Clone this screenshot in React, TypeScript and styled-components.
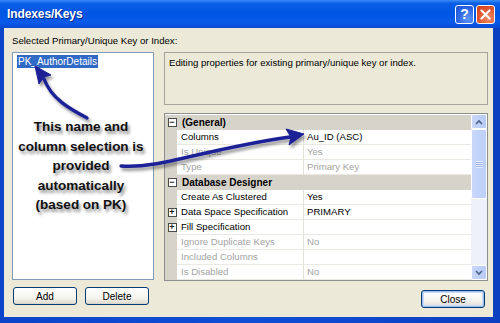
import React from 'react';
import styled, { createGlobalStyle } from 'styled-components';

const GlobalStyle = createGlobalStyle`
  html, body {
    margin: 0;
    padding: 0;
    background: #ffffff;
  }
  body {
    font-family: 'Liberation Sans', Arial, sans-serif;
  }
`;

type PropRow = {
  name: string;
  value?: string;
  category?: boolean;
  expander?: 'minus' | 'plus';
  disabled?: boolean;
};

const rows: PropRow[] = [
  { name: '(General)', category: true, expander: 'minus' },
  { name: 'Columns', value: 'Au_ID (ASC)' },
  { name: 'Is Unique', value: 'Yes', disabled: true },
  { name: 'Type', value: 'Primary Key', disabled: true },
  { name: 'Database Designer', category: true, expander: 'minus' },
  { name: 'Create As Clustered', value: 'Yes' },
  { name: 'Data Space Specification', value: 'PRIMARY', expander: 'plus' },
  { name: 'Fill Specification', value: '', expander: 'plus' },
  { name: 'Ignore Duplicate Keys', value: 'No', disabled: true },
  { name: 'Included Columns', value: '', disabled: true },
  { name: 'Is Disabled', value: 'No', disabled: true },
];

const App = () => {
  return (
    <>
      <GlobalStyle />
      <Window>
        <TitleBar>
          <Title>Indexes/Keys</Title>
          <CaptionButtons>
            <CaptionButton $kind='help'>?</CaptionButton>
            <CaptionButton $kind='close'>
              <svg width='11' height='11' viewBox='0 0 11 11'>
                <path d='M1.5 1.5 L9.5 9.5 M9.5 1.5 L1.5 9.5' stroke='#fff' strokeWidth='2.2' strokeLinecap='round' />
              </svg>
            </CaptionButton>
          </CaptionButtons>
        </TitleBar>
        <Body>
          <Label>Selected Primary/Unique Key or Index:</Label>
          <Columns>
            <LeftCol>
              <ListBox>
                <ListItem>PK_AuthorDetails</ListItem>
                <Callout>
                  This name and
                  <br />
                  column selection is
                  <br />
                  provided
                  <br />
                  automatically
                  <br />
                  (based on PK)
                </Callout>
              </ListBox>
              <ButtonRow>
                <Button>Add</Button>
                <Button>Delete</Button>
              </ButtonRow>
            </LeftCol>
            <RightCol>
              <Description>Editing properties for existing primary/unique key or index.</Description>
              <Grid>
                <Rows>
                  {rows.map((r) => (
                    <Row key={r.name} $category={r.category}>
                      <Gutter>
                        {r.expander && <Expander>{r.expander === 'minus' ? '−' : '+'}</Expander>}
                      </Gutter>
                      {r.category ? (
                        <CategoryName>{r.name}</CategoryName>
                      ) : (
                        <>
                          <Cell $disabled={r.disabled}>{r.name}</Cell>
                          <Cell $disabled={r.disabled} $value>
                            {r.value}
                          </Cell>
                        </>
                      )}
                    </Row>
                  ))}
                </Rows>
                <ScrollBar>
                  <ScrollButton>
                    <svg width='8' height='6' viewBox='0 0 8 6'>
                      <path d='M1 5 L4 2 L7 5' stroke='#4d6185' strokeWidth='1.6' fill='none' />
                    </svg>
                  </ScrollButton>
                  <Thumb>
                    <Grip />
                  </Thumb>
                  <Track />
                  <ScrollButton>
                    <svg width='8' height='6' viewBox='0 0 8 6'>
                      <path d='M1 1 L4 4 L7 1' stroke='#4d6185' strokeWidth='1.6' fill='none' />
                    </svg>
                  </ScrollButton>
                </ScrollBar>
              </Grid>
              <CloseRow>
                <Button $default>Close</Button>
              </CloseRow>
            </RightCol>
          </Columns>
        </Body>
        <Arrows width='500' height='323' viewBox='0 0 500 323'>
          <defs>
            <filter id='shadow' x='-20%' y='-20%' width='140%' height='140%'>
              <feDropShadow dx='2' dy='3' stdDeviation='1.6' floodColor='#000' floodOpacity='0.4' />
            </filter>
          </defs>
          <g filter='url(#shadow)' fill='#1b2096' stroke='#1b2096'>
            <path d='M87 118 C 72 110, 52 100, 44 79' fill='none' strokeWidth='3.4' strokeLinecap='round' />
            <polygon points='35,66 51,75 44,77 39,84' strokeWidth='1' strokeLinejoin='round' />
            <path d='M121 166 C 160 169, 200 150, 290 137' fill='none' strokeWidth='3.4' strokeLinecap='round' />
            <polygon points='304,134 289,145 291,137 286,129' strokeWidth='1' strokeLinejoin='round' />
          </g>
        </Arrows>
      </Window>
    </>
  );
};

export default App;

const Window = styled.div`
  position: relative;
  width: 500px;
  height: 323px;
  box-sizing: border-box;
  display: flex;
  flex-direction: column;
  padding: 0 7px 6px 4px;
  background: linear-gradient(to right, #0a44c8, #0f4fd6 50%, #0a3fc0);
  overflow: hidden;
`;

const TitleBar = styled.div`
  height: 28px;
  margin: 0 -7px 0 -4px;
  padding: 0 5px 0 7px;
  display: flex;
  align-items: center;
  justify-content: space-between;
  background: linear-gradient(to bottom, #3d8cf5 0%, #0a5fe6 12%, #0055e5 45%, #0a5ae8 80%, #0648d0 100%);
`;

const Title = styled.div`
  color: #ffffff;
  font-weight: 700;
  font-size: 12px;
  text-shadow: 1px 1px 0 #0a2a8a;
  letter-spacing: -0.1px;
`;

const CaptionButtons = styled.div`
  display: flex;
  gap: 2px;
`;

const CaptionButton = styled.div<{ $kind: 'help' | 'close' }>`
  width: 19px;
  height: 19px;
  box-sizing: border-box;
  border: 1px solid #ffffff;
  border-radius: 3px;
  display: flex;
  align-items: center;
  justify-content: center;
  color: #ffffff;
  font-weight: 700;
  font-size: 14px;
  background: ${({ $kind }) =>
    $kind === 'help'
      ? 'radial-gradient(circle at 70% 75%, #5e96f7, #2a63e4 60%, #1e50d3)'
      : 'radial-gradient(circle at 70% 75%, #f08a68, #e0532e 60%, #c83d1a)'};
`;

const Body = styled.div`
  flex: 1;
  background: #ece9d8;
  padding: 7px 0 0 8px;
  display: flex;
  flex-direction: column;
  font-size: 9.6px;
  color: #000000;
`;

const Label = styled.div`
  height: 12px;
  line-height: 12px;
  margin-bottom: 5px;
`;

const Columns = styled.div`
  display: flex;
  gap: 10px;
`;

const LeftCol = styled.div`
  width: 142px;
  display: flex;
  flex-direction: column;
`;

const ListBox = styled.div`
  position: relative;
  height: 228px;
  box-sizing: border-box;
  border: 1px solid #7f9db9;
  background: #ffffff;
  padding: 2px 4px;
`;

const ListItem = styled.div`
  display: inline-block;
  background: #316ac5;
  color: #ffffff;
  padding: 1px 1px;
  line-height: 11px;
  font-size: 10px;
`;

const Callout = styled.div`
  position: absolute;
  left: -10px;
  right: -6px;
  top: 64px;
  text-align: center;
  font-weight: 700;
  font-size: 13.5px;
  line-height: 19.5px;
  color: #111111;
  text-shadow: 2px 3px 3px rgba(0, 0, 0, 0.45);
`;

const ButtonRow = styled.div`
  display: flex;
  gap: 8px;
  margin-top: 7px;
  padding-left: 1px;
`;

const Button = styled.div<{ $default?: boolean }>`
  width: 64px;
  height: 18px;
  box-sizing: border-box;
  border: 1px solid #003c74;
  border-radius: 3px;
  display: flex;
  align-items: center;
  justify-content: center;
  font-size: 10px;
  background: linear-gradient(to bottom, #ffffff 0%, #f5f4ee 60%, #e4e1d6 90%, #d6d0c5 100%);
  box-shadow: ${({ $default }) => ($default ? 'inset 0 0 0 1px #9dbdf2, inset 0 0 0 2px #c9dbf9' : 'none')};
`;

const RightCol = styled.div`
  width: 324px;
  display: flex;
  flex-direction: column;
`;

const Description = styled.div`
  height: 53px;
  box-sizing: border-box;
  border: 1px solid #a5a29a;
  padding: 4px 4px;
  line-height: 12px;
  margin-bottom: 8px;
`;

const Grid = styled.div`
  height: 168px;
  box-sizing: border-box;
  border: 1px solid #8e8f8f;
  background: #ffffff;
  display: flex;
  padding-top: 1px;
`;

const Rows = styled.div`
  flex: 1;
  display: flex;
  flex-direction: column;
`;

const Row = styled.div<{ $category?: boolean }>`
  height: 15px;
  display: grid;
  grid-template-columns: 12px ${({ $category }) => ($category ? '1fr' : '126px 1fr')};
  background: ${({ $category }) => ($category ? '#d6d3cb' : '#ffffff')};
`;

const Gutter = styled.div`
  background: #d6d3cb;
  display: flex;
  align-items: center;
  justify-content: center;
  padding-left: 2px;
`;

const Expander = styled.div`
  width: 7px;
  height: 7px;
  border: 1px solid #4b4b4b;
  background: #ffffff;
  font-size: 9px;
  line-height: 7px;
  text-align: center;
  font-weight: 700;
  color: #1a1a1a;
`;

const CategoryName = styled.div`
  font-weight: 700;
  font-size: 10px;
  padding-left: 5px;
  line-height: 15px;
`;

const Cell = styled.div<{ $disabled?: boolean; $value?: boolean }>`
  line-height: 14px;
  padding-left: ${({ $value }) => ($value ? '3px' : '4px')};
  color: ${({ $disabled }) => ($disabled ? '#a3a3a3' : '#000000')};
  border-bottom: 1px solid #ebe9e3;
  border-left: ${({ $value }) => ($value ? '1px solid #e3e1da' : 'none')};
  white-space: nowrap;
  overflow: hidden;
`;

const ScrollBar = styled.div`
  width: 16px;
  display: flex;
  flex-direction: column;
  background: #eef1f9;
  margin-top: -1px;
`;

const ScrollButton = styled.div`
  height: 15px;
  box-sizing: border-box;
  border: 1px solid #ffffff;
  border-radius: 2px;
  background: linear-gradient(to right, #c8d7fa, #b6caf6);
  display: flex;
  align-items: center;
  justify-content: center;
`;

const Thumb = styled.div`
  height: 70px;
  box-sizing: border-box;
  border: 1px solid #ffffff;
  border-radius: 2px;
  background: linear-gradient(to right, #c9d8fb, #bccff8);
  display: flex;
  align-items: center;
  justify-content: center;
`;

const Grip = styled.div`
  width: 7px;
  height: 7px;
  background: repeating-linear-gradient(to bottom, #e8eefc 0px, #e8eefc 1px, #9fb4e6 1px, #9fb4e6 2px);
`;

const Track = styled.div`
  flex: 1;
`;

const CloseRow = styled.div`
  display: flex;
  justify-content: flex-end;
  margin-top: 9px;
  padding-right: 3px;
`;

const Arrows = styled.svg`
  position: absolute;
  left: 0;
  top: 0;
  pointer-events: none;
`;
